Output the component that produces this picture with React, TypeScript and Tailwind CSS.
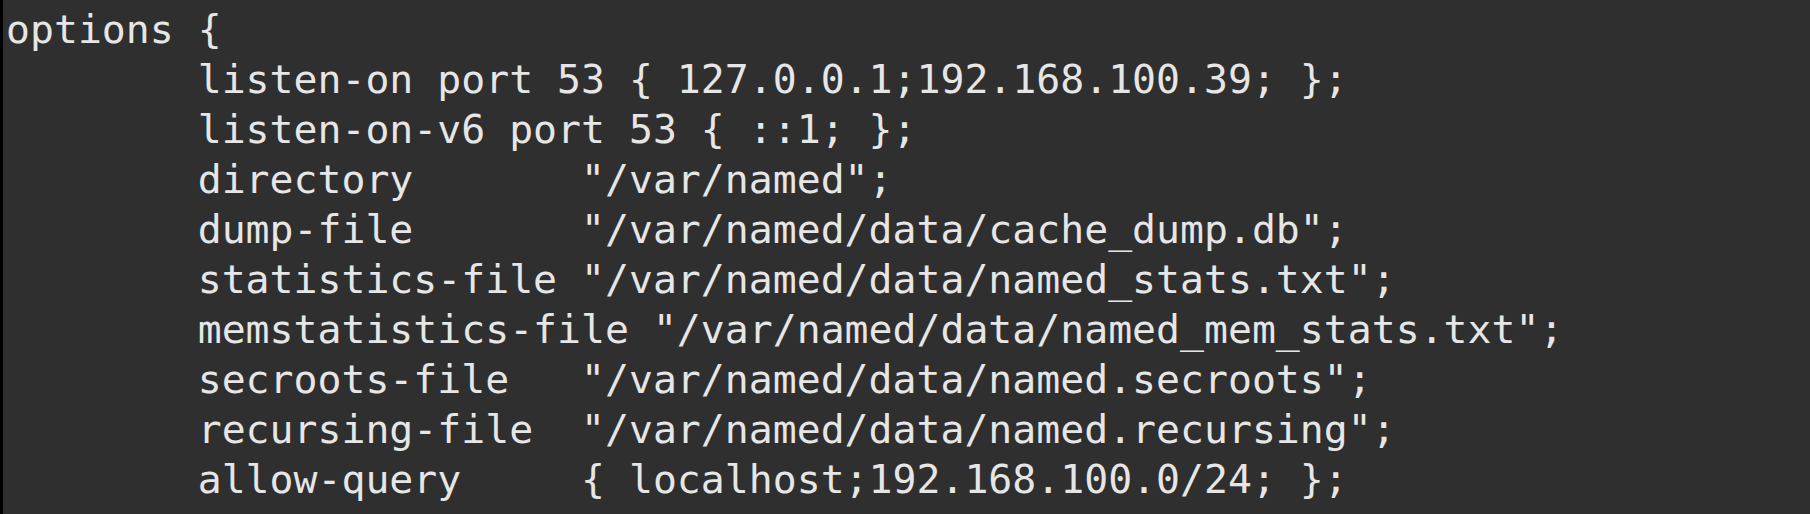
import React from "react";

const lines = [
  "options {",
  "        listen-on port 53 { 127.0.0.1;192.168.100.39; };",
  "        listen-on-v6 port 53 { ::1; };",
  '        directory       "/var/named";',
  '        dump-file       "/var/named/data/cache_dump.db";',
  '        statistics-file "/var/named/data/named_stats.txt";',
  '        memstatistics-file "/var/named/data/named_mem_stats.txt";',
  '        secroots-file   "/var/named/data/named.secroots";',
  '        recursing-file  "/var/named/data/named.recursing";',
  "        allow-query     { localhost;192.168.100.0/24; };",
];

export default function App() {
  return (
    <div className="w-[1810px] h-[514px] overflow-hidden bg-[#2f2f2f] border-l-[3px] border-black">
      <pre
        className="m-0 pt-[4px] pl-[3px] text-[39.8px] leading-[50px] text-[#e6e6e6] whitespace-pre"
        style={{ fontFamily: '"DejaVu Sans Mono", monospace' }}
      >
        {lines.map((l, i) => (
          <div key={i}>{l}</div>
        ))}
      </pre>
    </div>
  );
}
